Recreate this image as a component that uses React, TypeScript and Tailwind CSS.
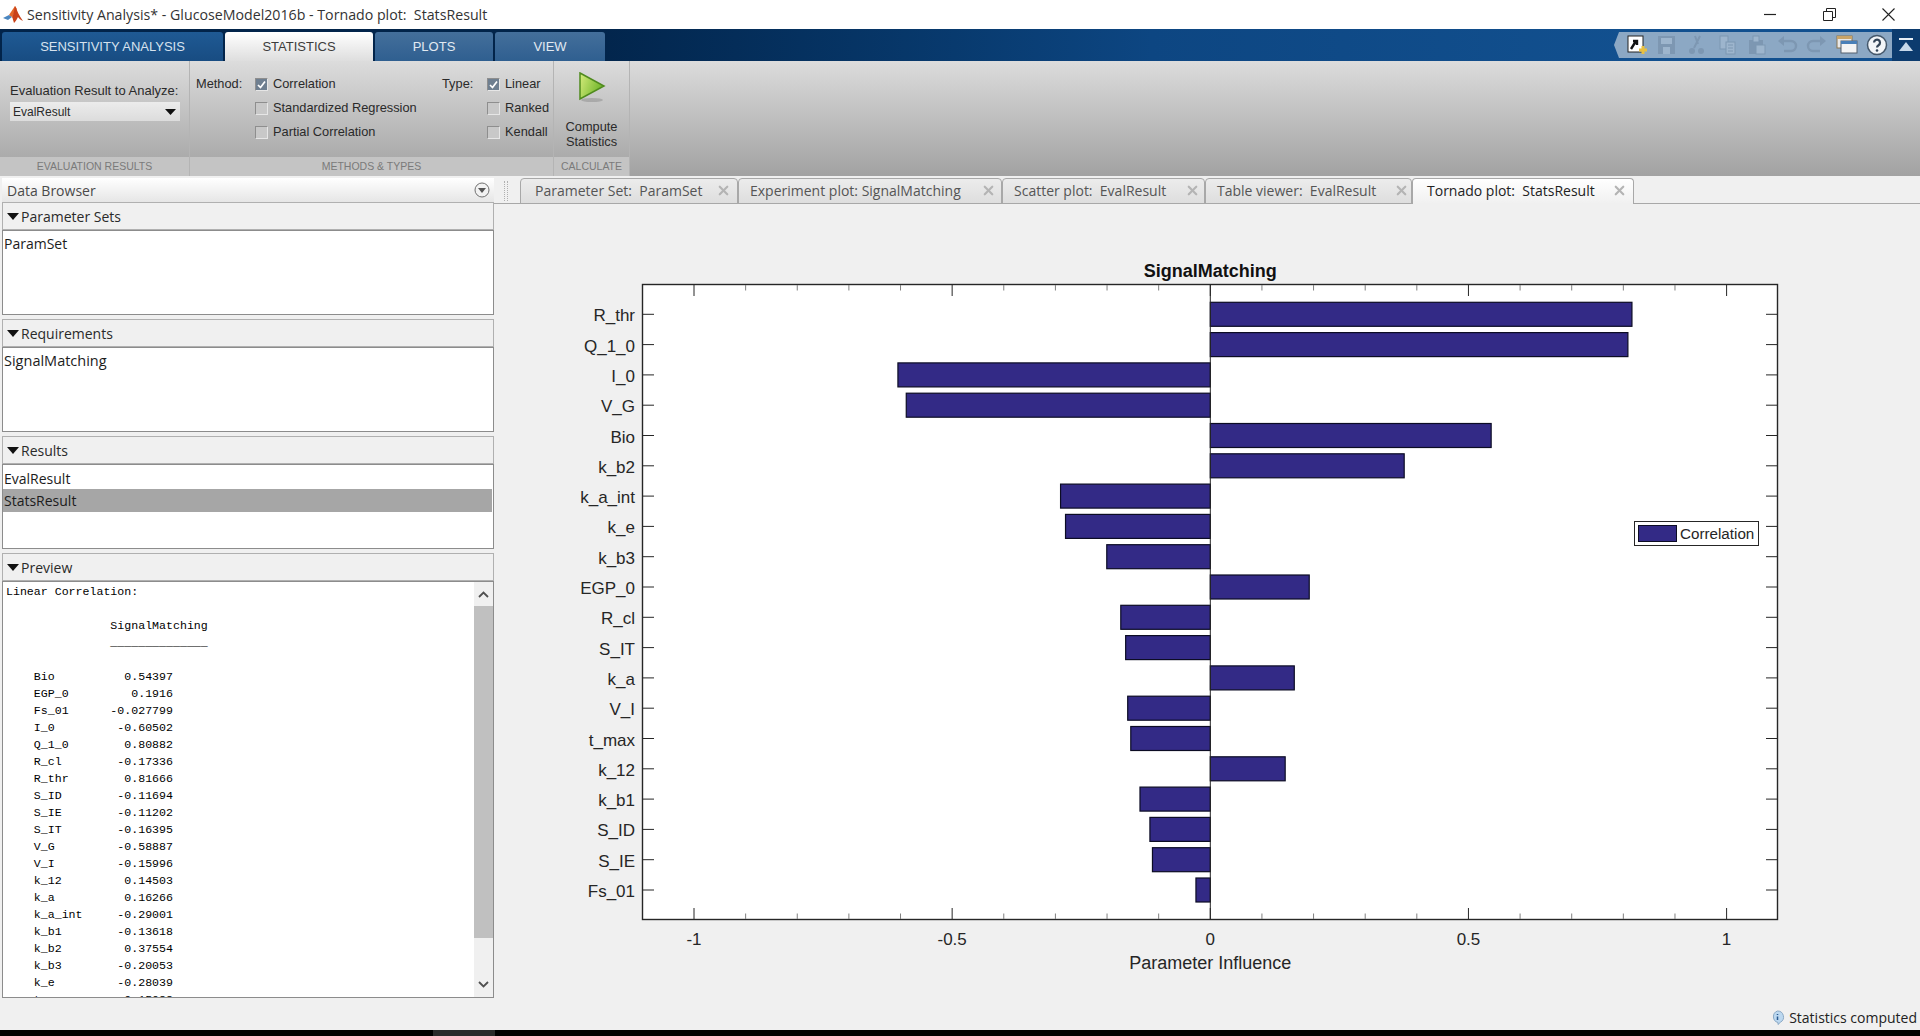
import { X } from "lucide-react";

const bars: [string, number][] = [
  ["R_thr", 0.81666],
  ["Q_1_0", 0.80882],
  ["I_0", -0.60502],
  ["V_G", -0.58887],
  ["Bio", 0.54397],
  ["k_b2", 0.37554],
  ["k_a_int", -0.29001],
  ["k_e", -0.28039],
  ["k_b3", -0.20053],
  ["EGP_0", 0.1916],
  ["R_cl", -0.17336],
  ["S_IT", -0.16395],
  ["k_a", 0.16266],
  ["V_I", -0.15996],
  ["t_max", -0.154],
  ["k_12", 0.14503],
  ["k_b1", -0.13618],
  ["S_ID", -0.11694],
  ["S_IE", -0.11202],
  ["Fs_01", -0.027799],
];

const preview: [string, string][] = [
  ["Bio", "0.54397"],
  ["EGP_0", "0.1916"],
  ["Fs_01", "-0.027799"],
  ["I_0", "-0.60502"],
  ["Q_1_0", "0.80882"],
  ["R_cl", "-0.17336"],
  ["R_thr", "0.81666"],
  ["S_ID", "-0.11694"],
  ["S_IE", "-0.11202"],
  ["S_IT", "-0.16395"],
  ["V_G", "-0.58887"],
  ["V_I", "-0.15996"],
  ["k_12", "0.14503"],
  ["k_a", "0.16266"],
  ["k_a_int", "-0.29001"],
  ["k_b1", "-0.13618"],
  ["k_b2", "0.37554"],
  ["k_b3", "-0.20053"],
  ["k_e", "-0.28039"],
  ["t_max", "-0.15088"],
];

const previewText = [
  "Linear Correlation:",
  "",
  "               SignalMatching",
  "               ______________",
  "",
  ...preview.map(([n, v]) => ("    " + n).padEnd(24 - v.length) + v),
].join("\n");

const ui = "font-['Open_Sans',sans-serif]";
const ribbonFont = "font-['Liberation_Sans',sans-serif]";

function MatlabIcon() {
  return (
    <svg width="22" height="20" viewBox="0 0 22 20" className="ml-[2px]">
      <path d="M1 13l6-3 3 2-4 3z" fill="#4a86c0" />
      <path d="M7 10l6-9 2 3-5 8z" fill="#e2662a" />
      <path d="M13 1c2 4 4 10 8 15-3-1-4-3-5-4-1 2-2 4-4 6-1-3-1-4-2-6 2-3 2-7 3-11z" fill="#c9421a" />
    </svg>
  );
}

function RibbonTab({ label, width, active, dim }: { label: string; width: string; active?: boolean; dim?: boolean }) {
  return (
    <div
      className={
        width +
        " flex h-[29px] items-center justify-center rounded-t-[3px] text-[13px] " +
        (active
          ? "bg-linear-to-b from-white to-[#dedede] text-[#3c3c3c]"
          : dim
            ? "bg-linear-to-b from-[#1f5a94] to-[#184c82] text-[#d6e2ee]"
            : "bg-linear-to-b from-[#446f9b] to-[#2f5f90] text-[#e2eaf2]")
      }
    >
      {label}
    </div>
  );
}

function QuickIcon({ children }: { children: React.ReactNode }) {
  return (
    <svg width="22" height="22" viewBox="0 0 22 22" className="w-[22px] shrink-0">
      {children}
    </svg>
  );
}

function QuickBar() {
  const faded = "#7d97b2";
  const pale = "#9db5cd";
  return (
    <div className="absolute top-[3px] right-[28px] flex h-[26px] w-[272px] items-center gap-[8px] bg-[#8ca8c4] pl-[6px]">
      <QuickIcon>
        <rect x="2" y="2" width="15" height="16" fill="#fff" stroke="#222" />
        <path d="M5 15l5-8M7 7h4v4" stroke="#111" strokeWidth="2.4" fill="none" />
        <path d="M13 16h8M17 12v8" stroke="#e8c040" strokeWidth="3" />
      </QuickIcon>
      <QuickIcon>
        <rect x="2" y="2" width="17" height="18" fill={faded} />
        <rect x="5" y="4" width="11" height="6" fill={pale} />
        <rect x="7" y="13" width="7" height="7" fill={pale} />
      </QuickIcon>
      <QuickIcon>
        <path d="M14 2L8 14M9 2l3 8" stroke={faded} strokeWidth="2" fill="none" />
        <circle cx="6" cy="17" r="3" fill={faded} />
        <circle cx="15" cy="17" r="3" fill={faded} />
      </QuickIcon>
      <QuickIcon>
        <rect x="4" y="2" width="8" height="13" fill={pale} stroke={faded} />
        <rect x="10" y="8" width="9" height="12" fill={pale} stroke={faded} />
        <path d="M12 11h5M12 14h5M12 17h5" stroke={faded} />
      </QuickIcon>
      <QuickIcon>
        <rect x="3" y="6" width="14" height="14" fill={faded} />
        <rect x="7" y="2" width="6" height="6" fill={pale} stroke={faded} />
        <rect x="10" y="11" width="9" height="9" fill={pale} stroke={faded} />
      </QuickIcon>
      <QuickIcon>
        <path d="M6 7h9a4.500 4.500 0 0 1 0 10H8" stroke={faded} strokeWidth="2.4" fill="none" />
        <path d="M8 2L2 7l6 5z" fill={faded} />
      </QuickIcon>
      <QuickIcon>
        <path d="M16 7H7a4.500 4.500 0 0 0 0 10h7" stroke={faded} strokeWidth="2.4" fill="none" />
        <path d="M14 2l6 5-6 5z" fill={faded} />
      </QuickIcon>
      <QuickIcon>
        <rect x="1" y="2" width="15" height="12" fill="#e8e8e8" stroke="#8a7550" />
        <rect x="1" y="2" width="15" height="3" fill="#c9a468" />
        <rect x="5" y="7" width="16" height="12" fill="#f4f4f4" stroke="#54616e" />
        <rect x="5" y="7" width="16" height="3" fill="#4a80b8" />
      </QuickIcon>
      <QuickIcon>
        <circle cx="11" cy="11" r="9.500" fill="#f2f5f8" stroke="#44576a" strokeWidth="1.500" />
        <path d="M8 8.500a3 3 0 1 1 4.500 2.700c-1 .6-1.500 1-1.500 2.300" stroke="#344558" strokeWidth="2.200" fill="none" />
        <circle cx="11" cy="16.500" r="1.300" fill="#344558" />
      </QuickIcon>
    </div>
  );
}

function Check({ checked, label }: { checked?: boolean; label?: string }) {
  return (
    <div className="flex h-[24px] items-center gap-[5px]">
      <div className="flex h-[13px] w-[13px] items-center justify-center border border-t-[#8e8e8e] border-r-[#e6e6e6] border-b-[#e6e6e6] border-l-[#8e8e8e] bg-[#c8c8c8]">
        {checked && (
          <svg width="11" height="11" viewBox="0 0 11 11">
            <rect width="11" height="11" fill="#6f7f90" />
            <path d="M2 6l2.500 2.500L9 2.500" stroke="#fff" strokeWidth="1.700" fill="none" />
          </svg>
        )}
      </div>
      {label && <span className="whitespace-nowrap">{label}</span>}
    </div>
  );
}

function RibbonSection({ title, width, children }: { title: string; width: string; children: React.ReactNode }) {
  return (
    <div className={width + " flex flex-col border-r border-[#b4b4b4]"}>
      <div className="min-h-0 flex-1">{children}</div>
      <div className="flex h-[19px] items-center justify-center bg-[#c4c4c4] text-[10.500px] text-[#7a7a7a]">{title}</div>
    </div>
  );
}

function Ribbon() {
  return (
    <div className={ribbonFont + " flex h-[115px] bg-linear-to-b from-[#dcdcdc] to-[#a2a2a2] text-[12.800px] text-[#2a2a2a]"}>
      <RibbonSection title="EVALUATION RESULTS" width="w-[190px]">
        <div className="px-[10px] pt-[22px]">
          <div className="h-[19px] whitespace-nowrap text-[13px] leading-[16px]">Evaluation Result to Analyze:</div>
          <div className="flex h-[19px] w-[170px] items-center justify-between bg-linear-to-b from-[#ececec] to-[#dcdcdc] pr-[4px] pl-[3px] text-[12px]">
            EvalResult
            <svg width="11" height="6" viewBox="0 0 11 6">
              <path d="M0 0h11L5.500 6z" fill="#111" />
            </svg>
          </div>
        </div>
      </RibbonSection>
      <RibbonSection title="METHODS &amp; TYPES" width="w-[364px]">
        <div className="flex pt-[11px] pl-[6px]">
          <div className="h-[24px] w-[59px] leading-[24px]">Method:</div>
          <div className="w-[187px]">
            <Check checked label="Correlation" />
            <Check label="Standardized Regression" />
            <Check label="Partial Correlation" />
          </div>
          <div className="h-[24px] w-[45px] leading-[24px]">Type:</div>
          <div>
            <Check checked label="Linear" />
            <Check label="Ranked" />
            <Check label="Kendall" />
          </div>
        </div>
      </RibbonSection>
      <RibbonSection title="CALCULATE" width="w-[76px]">
        <div className="flex flex-col items-center pt-[11px]">
          <svg width="28" height="31" viewBox="0 0 28 31">
            <defs>
              <linearGradient id="play" x1="0" y1="0" x2="1" y2="0.400">
                <stop offset="0" stopColor="#d6ec7c" />
                <stop offset="1" stopColor="#6fb52a" />
              </linearGradient>
            </defs>
            <ellipse cx="14" cy="28" rx="11" ry="2" fill="#8c8c8c" opacity="0.500" />
            <path d="M2 1l24 13L2 27z" fill="url(#play)" stroke="#4f8a1e" strokeWidth="1.500" />
          </svg>
          <div className="mt-[16px] text-center leading-[15px]">
            Compute
            <br />
            Statistics
          </div>
        </div>
      </RibbonSection>
    </div>
  );
}

function Group({ title, height, children }: { title: string; height: string; children: React.ReactNode }) {
  return (
    <div>
      <div className="flex h-[28px] items-center gap-[2px] border border-[#b0b0b0] bg-[#f0f0f0] pl-[4px] text-[#2a2a2a]">
        <svg width="12" height="7" viewBox="0 0 12 7">
          <path d="M0 0h12L6 7z" fill="#111" />
        </svg>
        {title}
      </div>
      <div className={height + " overflow-hidden border border-[#8c8c8c] bg-white text-[#1c1c1c]"}>{children}</div>
    </div>
  );
}

function DataBrowser() {
  return (
    <div className={ui + " ml-[2px] w-[492px] text-[14px]"}>
      <div className="flex h-[24px] items-center justify-between bg-linear-to-b from-white to-[#e6e6e6] pr-[4px] pl-[5px] text-[#4a4a4a]">
        Data Browser
        <svg width="16" height="16" viewBox="0 0 16 16">
          <circle cx="8" cy="8" r="7" fill="#f2f2f2" stroke="#707070" />
          <path d="M4 6h8l-4 5z" fill="#555" />
        </svg>
      </div>
      <div className="flex flex-col gap-[4px]">
        <Group title="Parameter Sets" height="h-[85px]">
          <div className="pt-[2px] pl-[1px] leading-[21px]">ParamSet</div>
        </Group>
        <Group title="Requirements" height="h-[85px]">
          <div className="pt-[2px] pl-[1px] text-[14.500px] leading-[21px]">SignalMatching</div>
        </Group>
        <Group title="Results" height="h-[85px]">
          <div className="pt-[3px] pl-[1px] leading-[21px]">EvalResult</div>
          <div className="mr-[1px] bg-[#a6a6a6] pl-[1px] leading-[23px]">StatsResult</div>
        </Group>
        <Group title="Preview" height="h-[417px]">
          <div className="flex h-full">
            <pre className="h-full flex-1 overflow-hidden pt-[1px] pl-[3px] font-['Liberation_Mono',monospace] text-[11.600px] leading-[17px] text-black">
              {previewText}
            </pre>
            <div className="flex w-[19px] flex-col bg-[#f0f0f0]">
              <div className="flex h-[24px] items-center justify-center">
                <svg width="11" height="7" viewBox="0 0 11 7">
                  <path d="M1 6l4.500-4.500L10 6" stroke="#505050" strokeWidth="1.800" fill="none" />
                </svg>
              </div>
              <div className="h-[332px] bg-[#c0c0c0]" />
              <div className="flex flex-1 items-end justify-center pb-[9px]">
                <svg width="11" height="7" viewBox="0 0 11 7">
                  <path d="M1 1l4.500 4.500L10 1" stroke="#505050" strokeWidth="1.800" fill="none" />
                </svg>
              </div>
            </div>
          </div>
        </Group>
      </div>
    </div>
  );
}

const tabs: { label: string; box: string; active?: boolean }[] = [
  { label: "Parameter Set:  ParamSet", box: "w-[218px] pl-[14px] pr-[6px]" },
  { label: "Experiment plot: SignalMatching", box: "w-[264px] pl-[11px] pr-[5px]" },
  { label: "Scatter plot:  EvalResult", box: "w-[203px] pl-[11px] pr-[4px]" },
  { label: "Table viewer:  EvalResult", box: "w-[207px] pl-[11px] pr-[2px]" },
  { label: "Tornado plot:  StatsResult", box: "w-[222px] pl-[14px] pr-[6px]", active: true },
];

function TabStrip() {
  return (
    <div className={ui + " flex h-[26px] items-end border-b border-[#a8a8a8] text-[14px]"}>
      <div className="mr-[12px] ml-[10px] h-[20px] w-[4px] self-center border-x border-dotted border-[#b0b0b0]" />
      {tabs.map((t) => (
        <div
          key={t.label}
          className={
            t.box +
            " -mb-px flex h-[26px] items-center justify-between rounded-t-[4px] border border-[#a8a8a8] pb-[2px] whitespace-pre " +
            (t.active ? "border-b-0 bg-linear-to-b from-white to-[#f0f0f0] text-[#222]" : "bg-linear-to-b from-[#ececec] to-[#dedede] text-[#555]")
          }
        >
          {t.label}
          <X size={15} strokeWidth={3.5} className="text-[#b4b4b4]" />
        </div>
      ))}
    </div>
  );
}

const x0 = 1210.3;
const xScale = 516.3;
const yFor = (i: number) => 314.3 + i * 30.3;
const minorTicks = Array.from({ length: 21 }, (_, i) => -1 + i * 0.1);

function Chart() {
  return (
    <svg viewBox="494 204 1426 800" width="1426" height="800" className="block" fontFamily="'Liberation Sans', sans-serif">
      <text x={x0} y={277} textAnchor="middle" fontSize="18" fontWeight="700" fill="#111">
        SignalMatching
      </text>
      <rect x="642.500" y="284.500" width="1135" height="635" fill="#fff" stroke="#262626" strokeWidth="1.400" />
      {minorTicks.map((v, i) => {
        const x = x0 + v * xScale;
        const major = i % 5 === 0;
        const len = major ? 11 : 5.5;
        return (
          <g key={i} stroke={major ? "#262626" : "#808080"}>
            <line x1={x} x2={x} y1={285} y2={285 + len} />
            <line x1={x} x2={x} y1={919} y2={919 - len} />
          </g>
        );
      })}
      {bars.map(([name, v], i) => {
        const y = yFor(i);
        const w = v * xScale;
        return (
          <g key={name}>
            <line x1={643} x2={654} y1={y} y2={y} stroke="#262626" />
            <line x1={1766} x2={1777} y1={y} y2={y} stroke="#262626" />
            <rect
              x={Math.min(x0, x0 + w)}
              y={y - 12}
              width={Math.abs(w)}
              height={24}
              fill="#332a86"
              stroke="#0c0c24"
              strokeWidth="1.200"
            />
            <text x={635} y={y + 7} textAnchor="end" fontSize="17" fill="#262626">
              {name}
            </text>
          </g>
        );
      })}
      <line x1={x0} x2={x0} y1={285} y2={919} stroke="#262626" />
      {[-1, -0.5, 0, 0.5, 1].map((v) => (
        <text key={v} x={x0 + v * xScale} y={945} textAnchor="middle" fontSize="17" fill="#262626">
          {v}
        </text>
      ))}
      <text x={x0} y={969} textAnchor="middle" fontSize="18" fill="#262626">
        Parameter Influence
      </text>
      <rect x="1634.500" y="521.500" width="124" height="24" fill="#fff" stroke="#262626" />
      <rect x="1638.500" y="525.500" width="38" height="16" fill="#332a86" stroke="#0c0c24" />
      <text x={1680} y={539} fontSize="15.200" fill="#262626">
        Correlation
      </text>
    </svg>
  );
}

export default function App() {
  return (
    <div className="flex h-[1036px] w-[1920px] flex-col overflow-hidden bg-[#f0f0f0]">
      <div className={ui + " flex h-[29px] items-center gap-[3px] bg-white text-[14.200px] text-[#333]"}>
        <MatlabIcon />
        <span className="whitespace-pre">Sensitivity Analysis* - GlucoseModel2016b - Tornado plot:  StatsResult</span>
        <div className="ml-auto flex items-center gap-[46px] pr-[25px]">
          <svg width="13" height="13" viewBox="0 0 13 13">
            <path d="M0 6.500h12" stroke="#222" strokeWidth="1.200" />
          </svg>
          <svg width="13" height="13" viewBox="0 0 13 13">
            <path d="M.5 3.500h9v9h-9zM3.500 3.500v-3h9v9h-3" stroke="#222" fill="none" />
          </svg>
          <svg width="13" height="13" viewBox="0 0 13 13">
            <path d="M.5.500l12 12M12.500.500l-12 12" stroke="#222" strokeWidth="1.100" />
          </svg>
        </div>
      </div>

      <div className={ribbonFont + " relative flex h-[32px] items-end gap-[2px] bg-linear-to-r from-[#02244a] from-30% via-[#0d4682] via-60% to-[#12508f] to-85% pl-[2px]"}>
        <RibbonTab label="SENSITIVITY ANALYSIS" width="w-[221px]" dim />
        <RibbonTab label="STATISTICS" width="w-[148px]" active />
        <RibbonTab label="PLOTS" width="w-[118px]" />
        <RibbonTab label="VIEW" width="w-[110px]" />
        <svg width="6" height="26" viewBox="0 0 6 26" className="absolute top-[3px] right-[300px]">
          <path d="M6 0v26H5L0 13 5 0z" fill="#8ca8c4" />
        </svg>
        <QuickBar />
        <div className="absolute top-0 right-0 flex h-full w-[28px] items-center justify-center bg-[#0c3b6e]">
          <svg width="14" height="14" viewBox="0 0 14 14">
            <path d="M0 0h14v2H0z" fill="#e6edf4" />
            <path d="M7 4l7 9H0z" fill="#c6d8ea" />
          </svg>
        </div>
      </div>

      <Ribbon />

      <div className="flex min-h-0 flex-1 pt-[2px]">
        <DataBrowser />
        <div className="flex-1">
          <TabStrip />
          <Chart />
        </div>
      </div>

      <div className={ui + " flex h-[26px] items-center justify-end gap-[4px] pr-[3px] text-[14px] text-[#222]"}>
        <svg width="15" height="15" viewBox="0 0 15 15">
          <path d="M7.500 1a6 6 0 0 1 3 11.200L8 14.500v-2a6 6 0 0 1-.500-11.500z" fill="#bcd8f0" stroke="#8aa8c4" />
          <path d="M7.500 4v1M7.500 6.500v3.500" stroke="#2a5a90" strokeWidth="1.500" />
        </svg>
        Statistics computed
      </div>
      <div className="flex h-[6px] bg-black">
        <div className="ml-[433px] w-[62px] bg-[#2a2a2a]" />
      </div>
    </div>
  );
}
